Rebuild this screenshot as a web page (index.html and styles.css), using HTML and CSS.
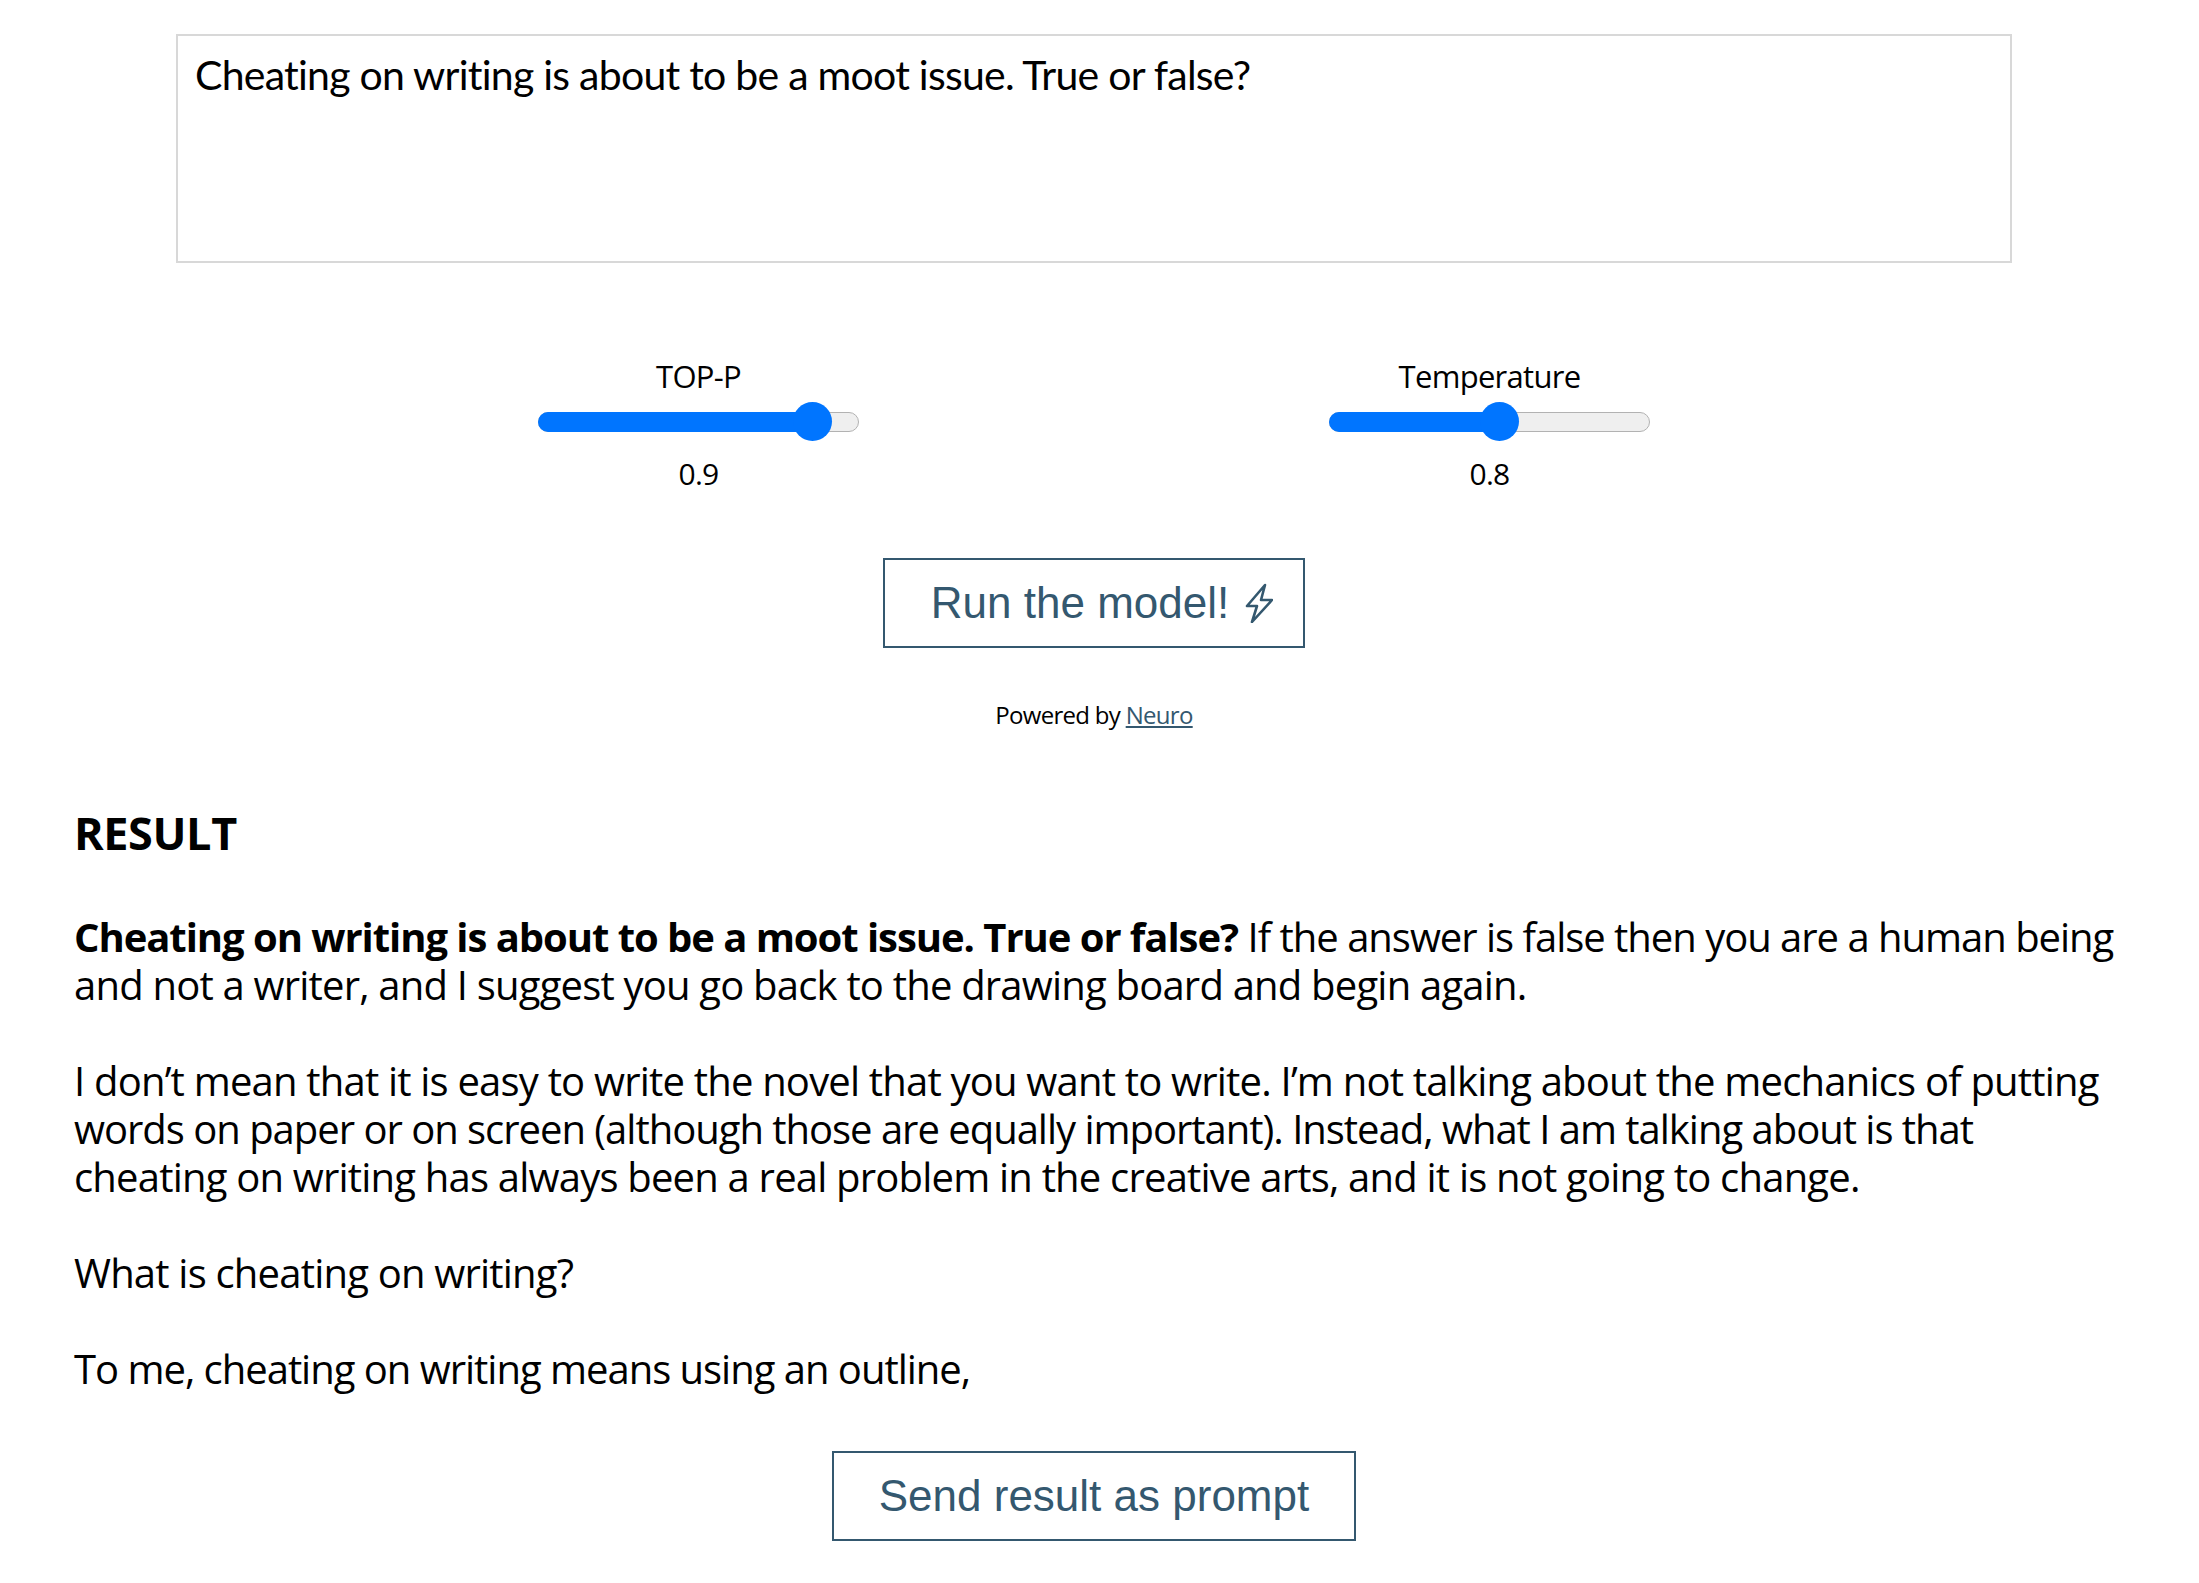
FILE: index.html
```html
<!DOCTYPE html>
<html lang="en">
<head>
  <meta charset="UTF-8" />
  <title>Neuro text model</title>
  <link rel="stylesheet" href="styles.css">
</head>
<body>
  <div class="prompt-wrap">
    <div class="prompt">Cheating on writing is about to be a moot issue. True or false?</div>
  </div>

  <div class="sliders">
    <div class="slider-box">
      <div class="slider-label">TOP-P</div>
      <div class="track">
        <div class="fill" style="width: 274px"></div>
        <div class="thumb" style="left: 274px"></div>
      </div>
      <div class="slider-value">0.9</div>
    </div>
    <div class="slider-box">
      <div class="slider-label">Temperature</div>
      <div class="track">
        <div class="fill" style="width: 170px"></div>
        <div class="thumb" style="left: 170px"></div>
      </div>
      <div class="slider-value">0.8</div>
    </div>
  </div>

  <div class="actions">
    <button class="btn btn-run" type="button">
      Run the model!
      <svg class="bolt" viewBox="0 0 28 40" width="28" height="40" fill="none" stroke="#34586f" stroke-width="2.6" stroke-linejoin="round" stroke-linecap="round">
        <path d="M20 2 L2 23 H12 L7 39 L27 17 H16 Z"/>
      </svg>
    </button>
  </div>

  <p class="powered">Powered by <a href="#">Neuro</a></p>

  <div class="result">
    <h2>RESULT</h2>
    <p><strong>Cheating on writing is about to be a moot issue. True or false?</strong> <span class="tight">If the answer is false then you are a human being</span><br>and not a writer, and I suggest you go back to the drawing board and begin again.</p>
    <p>I don’t mean that it is easy to write the novel that you want to write. I’m not talking about the mechanics of putting<br><span class="tight">words on paper or on screen (although those are equally important). Instead, what I am talking about is that</span><br>cheating on writing has always been a real problem in the creative arts, and it is not going to change.</p>
    <p>What is cheating on writing?</p>
    <p class="tight">To me, cheating on writing means using an outline,</p>
  </div>

  <div class="actions">
    <button class="btn btn-send" type="button">Send result as prompt</button>
  </div>
</body>
</html>
```

FILE: styles.css
```css
body {
  width: 2188px;
  margin: 0;
  background: #fff;
  color: #000;
  font-family: "Open Sans", "Noto Sans", sans-serif;
}
.prompt-wrap {
  padding: 34px 176px 0;
}
.prompt {
  box-sizing: border-box;
  height: 229px;
  padding: 15px 17px;
  border: 2px solid #d8d8d8;
  font-family: Lato, sans-serif;
  font-size: 41px;
  line-height: 48px;
  letter-spacing: -0.75px;
}
.sliders {
  display: flex;
  justify-content: center;
  gap: 470px;
  margin-top: 93px;
}
.slider-box {
  width: 321px;
  text-align: center;
  font-size: 30px;
}
.slider-label {
  height: 40px;
  margin-bottom: 16px;
  font-size: 31px;
  line-height: 40px;
  letter-spacing: -0.7px;
}
.slider-value {
  margin-top: 22px;
  line-height: 40px;
  letter-spacing: -0.8px;
}
.track {
  position: relative;
  box-sizing: border-box;
  height: 20px;
  background: #efefef;
  border: 1px solid #b2b2b2;
  border-radius: 10px;
}
.fill {
  position: absolute;
  left: -1px;
  top: -1px;
  height: 20px;
  background: #0075ff;
  border-radius: 10px 0 0 10px;
}
.thumb {
  position: absolute;
  top: 9px;
  width: 39px;
  height: 39px;
  margin: -20px 0 0 -20px;
  background: #0075ff;
  border-radius: 50%;
}
.actions {
  display: flex;
  justify-content: center;
}
.btn {
  box-sizing: border-box;
  display: flex;
  align-items: center;
  justify-content: center;
  height: 90px;
  background: #fff;
  border: 2px solid #34586f;
  color: #34586f;
  font-family: "Liberation Sans", Arial, sans-serif;
  font-size: 44px;
}
.btn-run {
  width: 422px;
  margin-top: 64px;
  padding-left: 22px;
  gap: 16px;
}
.btn-send {
  width: 524px;
  margin-top: 58px;
}
.powered {
  margin: 49px 0 0;
  text-align: center;
  font-size: 24px;
  line-height: 36px;
  letter-spacing: -0.7px;
}
.powered a {
  color: #34586f;
}
.result {
  padding: 0 0 0 74px;
  font-size: 40px;
  line-height: 48px;
  letter-spacing: -0.8px;
  white-space: nowrap;
}
.result strong {
  letter-spacing: -1.05px;
}
.result .tight {
  letter-spacing: -1.02px;
}
.result h2 {
  margin: 67px 0 0;
  font-size: 45px;
  line-height: 66px;
  font-weight: 700;
  letter-spacing: -0.4px;
}
.result p {
  margin: 48px 0 0;
}
.result h2 + p {
  margin-top: 47px;
}
```
